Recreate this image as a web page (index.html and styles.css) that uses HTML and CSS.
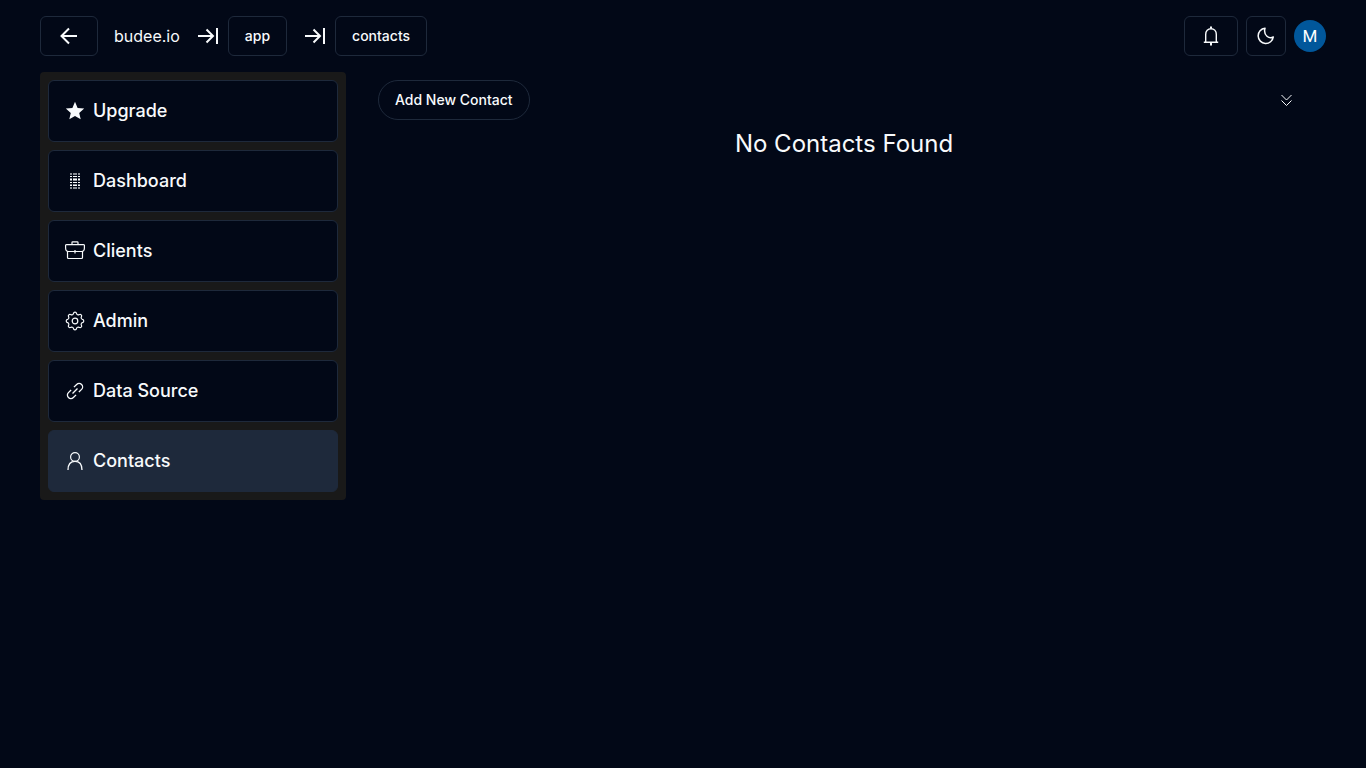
FILE: index.html
```html
<!DOCTYPE html>
<html lang="en">
<head>
<meta charset="utf-8">
<meta name="viewport" content="width=device-width, initial-scale=1">
<title>Contacts</title>
<link rel="stylesheet" href="styles.css">
</head>
<body>
<header class="topbar">
  <nav class="crumbs" aria-label="Breadcrumb">
    <button class="btn back" type="button" aria-label="Back">
      <svg class="icon-lg" viewBox="0 0 24 24"><path d="M20 12H5M12 4.500L4.500 12L12 19.500" stroke-width="2"/></svg>
    </button>
    <a class="brand" href="#">budee.io</a>
    <span class="crumb">
      <svg class="icon-lg" viewBox="0 0 24 24"><path d="M2 12H17M10.500 5.500L17 12L10.500 18.500M21 4V20" stroke-width="2"/></svg>
      <a class="btn" href="#">app</a>
    </span>
    <span class="crumb">
      <svg class="icon-lg" viewBox="0 0 24 24"><path d="M2 12H17M10.500 5.500L17 12L10.500 18.500M21 4V20" stroke-width="2"/></svg>
      <a class="btn" href="#">contacts</a>
    </span>
  </nav>
  <div class="actions">
    <button class="btn" type="button" aria-label="Notifications">
      <svg class="icon" viewBox="0 0 20 20"><path d="M4.700 16V8.500C4.700 5 7 2.800 10 2.800S15.300 5 15.300 8.500V16M2.800 16.300H17.200" stroke-width="1.400"/><path d="M10 .5V2.500M10 17V19.500" stroke-width="2"/></svg>
    </button>
    <button class="btn square" type="button" aria-label="Toggle theme">
      <svg class="icon" viewBox="0 0 20 20"><path d="M9 2.300A7.600 7.600 0 1 0 17.300 10.900C13.500 13.400 7 9.500 9 2.300Z" stroke-width="1.500" stroke-linejoin="round"/></svg>
    </button>
    <button class="avatar" type="button" aria-label="Account">M</button>
  </div>
</header>
<div class="layout">
  <nav class="sidebar" aria-label="Main">
    <a class="item" href="#">
      <svg class="icon" viewBox="0 0 20 20"><path class="solid" d="M10 .8L12.600 6.900L19.200 7.500L14.200 11.900L15.700 18.300L10 14.900L4.300 18.300L5.800 11.900L.8 7.500L7.400 6.900Z"/></svg>
      Upgrade
    </a>
    <a class="item" href="#">
      <svg class="icon" viewBox="0 0 20 20"><path d="M5 5.500H15M5 8.500H15M5 11.500H15M5 14.500H15" stroke-width="1" stroke-dasharray="2 1 4 1"/><path d="M5 2.500H15M5 3.500H15M5 7.500H15M5 9.500H15M5 13.500H15M5 16.500H15M5 17.500H15" stroke-width="1" stroke-dasharray="2 1 4 1" opacity=".55"/></svg>
      Dashboard
    </a>
    <a class="item" href="#">
      <svg class="icon" viewBox="0 0 20 20"><path d="M1.500 3.600H18.500Q19.500 3.600 19.400 4.600V7Q19.400 10.500 16.500 10.500H3.500Q.6 10.500 .6 7V4.600Q.5 3.600 1.500 3.600ZM2.500 10.500V16.500Q2.500 17.500 3.500 17.500H16.500Q17.500 17.500 17.500 16.500V10.500M7 3.600V1.500Q7 .8 7.700 .8H12.300Q13 .8 13 1.500V3.600M10 9V12.500" stroke-width="1.200"/></svg>
      Clients
    </a>
    <a class="item" href="#">
      <svg class="icon" viewBox="0 0 20 20"><circle cx="10" cy="10" r="2.800" stroke-width="1.200"/><path d="M17.430 8.420A1.600 1.600 0 0 1 17.430 11.580A1.800 1.800 0 0 0 16.370 14.140A1.600 1.600 0 0 1 14.140 16.370A1.800 1.800 0 0 0 11.580 17.430A1.600 1.600 0 0 1 8.420 17.430A1.800 1.800 0 0 0 5.860 16.370A1.600 1.600 0 0 1 3.630 14.140A1.800 1.800 0 0 0 2.570 11.580A1.600 1.600 0 0 1 2.570 8.420A1.800 1.800 0 0 0 3.630 5.860A1.600 1.600 0 0 1 5.860 3.630A1.800 1.800 0 0 0 8.420 2.570A1.600 1.600 0 0 1 11.580 2.570A1.800 1.800 0 0 0 14.140 3.630A1.600 1.600 0 0 1 16.370 5.860A1.800 1.800 0 0 0 17.430 8.420Z" stroke-width="1.200"/></svg>
      Admin
    </a>
    <a class="item" href="#">
      <svg class="icon" viewBox="0 0 20 20"><path transform="rotate(-45 10 10)" d="M8 6.500H4.200A3.500 3.500 0 0 0 4.200 13.500H8M12 6.500H15.800A3.500 3.500 0 0 1 15.800 13.500H12M6.500 10H13.500" stroke-width="1.300"/></svg>
      Data Source
    </a>
    <a class="item active" href="#" aria-current="page">
      <svg class="icon" viewBox="0 0 20 20"><circle cx="10" cy="6" r="4.400" stroke-width="1.200"/><path d="M3 19C3 13.500 5.500 10.400 10 10.400S17 13.500 17 19" stroke-width="1.300"/></svg>
      Contacts
    </a>
  </nav>
  <main class="content">
    <div class="toolbar">
      <button class="btn pill" type="button">Add New Contact</button>
      <button class="expand" type="button" aria-label="Expand">
        <svg class="icon-sm" viewBox="0 0 16 16"><path d="M3.500 3L8.500 8L13.500 3M3.500 8.500L8.500 13.500L13.500 8.500" stroke-width="1"/></svg>
      </button>
    </div>
    <h1 class="empty">No Contacts Found</h1>
  </main>
</div>
</body>
</html>
```
FILE: styles.css
```css
* { box-sizing: border-box; }
body {
  margin: 0;
  min-height: 100vh;
  background: #020817;
  color: #f8fafc;
  font: 400 16px/24px Inter, "Liberation Sans", sans-serif;
}
a { color: inherit; text-decoration: none; }
button { color: inherit; font: inherit; cursor: pointer; }
svg {
  flex: none;
  fill: none;
  stroke: currentColor;
}
.solid { fill: currentColor; stroke: none; }
.icon { width: 20px; height: 20px; }
.icon-lg { width: 24px; height: 24px; }
.icon-sm { width: 16px; height: 16px; }
.topbar {
  display: flex;
  align-items: center;
  justify-content: space-between;
  padding: 16px 40px;
}
.crumbs { display: flex; align-items: center; gap: 16px; }
.crumb, .actions { display: flex; align-items: center; gap: 8px; }
.btn {
  display: inline-flex;
  align-items: center;
  justify-content: center;
  height: 40px;
  padding: 0 16px;
  border: 1px solid #1e293b;
  border-radius: 6px;
  background: transparent;
  font-size: 14px;
  line-height: 20px;
  font-weight: 500;
}
.square { width: 40px; padding: 0; }
.pill { border-radius: 20px; }
.avatar {
  width: 32px;
  height: 32px;
  padding: 0;
  border: 0;
  border-radius: 50%;
  background: #01579b;
  color: #fff;
  font: 400 17px/32px Roboto, sans-serif;
}
.layout { display: flex; align-items: flex-start; gap: 32px; padding: 0 40px; }
.sidebar {
  display: flex;
  flex: 0 0 306px;
  flex-direction: column;
  gap: 8px;
  padding: 8px;
  border-radius: 4px;
  background: #191919;
}
.item {
  display: flex;
  align-items: center;
  gap: 8px;
  padding: 16px;
  border: 1px solid #1e293b;
  border-radius: 6px;
  background: #020817;
  font-size: 18px;
  line-height: 28px;
  font-weight: 500;
}
.active { background: #1e293b; }
.content { flex: 1; padding: 8px 16px 0 0; }
.toolbar { display: flex; align-items: center; justify-content: space-between; }
.expand {
  display: flex;
  padding: 16px;
  margin: -4px 0;
  border: 0;
  background: transparent;
}
.empty {
  margin: 8px 0 0;
  font-size: 24px;
  line-height: 32px;
  font-weight: 400;
  text-align: center;
}
```
